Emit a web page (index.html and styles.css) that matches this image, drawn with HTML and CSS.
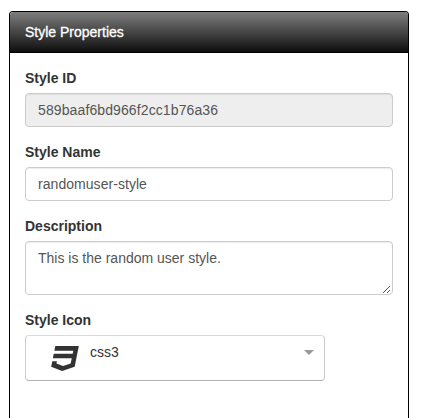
FILE: index.html
```html
<!DOCTYPE html>
<html lang="en">
<head>
<meta charset="utf-8">
<title>Style Properties</title>
<link rel="stylesheet" href="styles.css">
</head>
<body>
<section class="panel">
  <header class="panel-heading">Style Properties</header>
  <form class="panel-body">
    <div class="form-group">
      <label for="style-id">Style ID</label>
      <input id="style-id" class="form-control" type="text" value="589baaf6bd966f2cc1b76a36" readonly>
    </div>
    <div class="form-group">
      <label for="style-name">Style Name</label>
      <input id="style-name" class="form-control name-input" type="text" value="randomuser-style">
    </div>
    <div class="form-group">
      <label for="description">Description</label>
      <div class="textarea-wrap">
        <textarea id="description" class="form-control" rows="2">This is the random user style.</textarea>
        <svg class="grip" viewBox="0 0 8 8" shape-rendering="crispEdges"><path d="M0 7h1v1H0zM1 6h1v1H1zM2 5h1v1H2zM3 4h1v1H3zM4 3h1v1H4zM5 2h1v1H5zM6 1h1v1H6zM4 7h1v1H4zM5 6h1v1H5zM6 5h1v1H6z"/></svg>
      </div>
    </div>
    <div class="form-group">
      <label>Style Icon</label>
      <div class="select">
        <svg class="css3" viewBox="0 0 1792 1792"><path d="M275 128h1505l-266 1333-804 267-698-267 71-356h297l-29 147 422 161 486-161 68-339h-1208l58-297h1209l38-191h-1208z"/></svg>
        <span class="value">css3</span>
        <span class="caret"></span>
      </div>
    </div>
  </form>
</section>
</body>
</html>
```
FILE: styles.css
```css
* { box-sizing: border-box; }
body {
  margin: 0;
  padding: 11px 12px 0 9px;
  height: 418px;
  background: #fff;
  color: #333;
  font: 14px/20px "Liberation Sans", Arial, sans-serif;
}
.panel {
  width: 400px;
  height: 407px;
  border: 1px solid #000;
  border-bottom: 0;
  border-radius: 4px 4px 0 0;
}
.panel-heading {
  height: 41px;
  padding: 10px 15px;
  border-bottom: 1px solid #000;
  border-radius: 3px 3px 0 0;
  background: linear-gradient(#7d7d7d, #0e0e0e);
  color: #fff;
  -webkit-text-stroke: 0.3px #fff;
}
.panel-body { margin: 0; padding: 15px; }
.form-group { margin-bottom: 15px; }
.form-group:last-child { margin-bottom: 0; }
label {
  display: block;
  margin-bottom: 5px;
  font-weight: bold;
}
.form-control {
  display: block;
  width: 100%;
  height: 34px;
  padding: 6px 12px;
  border: 1px solid #ccc;
  border-radius: 4px;
  outline: 0;
  background: #fff;
  box-shadow: inset 0 1px 1px rgba(0, 0, 0, .075);
  color: #555;
  font: inherit;
}
.form-control[readonly] {
  background: #eee;
  letter-spacing: 0.11px;
}
.name-input { letter-spacing: 0.05px; }
.textarea-wrap { position: relative; }
textarea.form-control {
  height: 54px;
  resize: none;
  overflow: hidden;
}
.grip {
  position: absolute;
  right: 2px;
  bottom: 2px;
  width: 8px;
  height: 8px;
  fill: #555;
}
.select {
  display: flex;
  align-items: flex-start;
  width: 300px;
  height: 46px;
  padding: 0 10px 0 25px;
  border: 1px solid #ccc;
  border-top-color: #d9d9d9;
  border-bottom-color: #b3b3b3;
  border-radius: 4px;
}
.css3 {
  width: 28px;
  height: 28px;
  margin-top: 8px;
  fill: #333;
}
.value { margin: 6px auto 0 11px; }
.caret {
  margin-top: 14px;
  border: 5px solid transparent;
  border-top-color: #999;
  border-bottom: 0;
}
```
